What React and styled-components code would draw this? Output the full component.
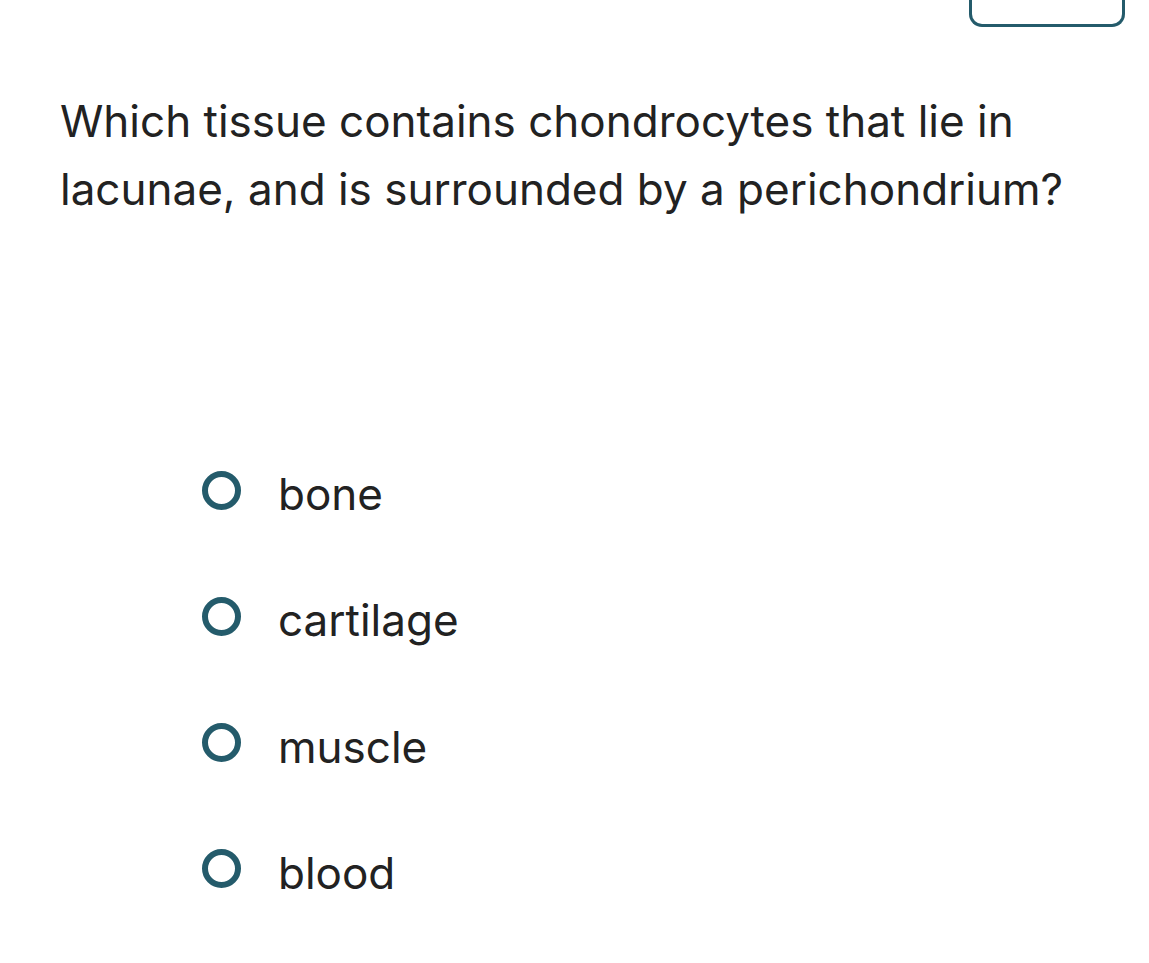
import React from "react";
import styled, { createGlobalStyle } from "styled-components";

const Global = createGlobalStyle`
  html, body { margin: 0; padding: 0; background: #ffffff; }
  body { font-family: "Inter", "Liberation Sans", sans-serif; color: #222222; }
`;

const Page = styled.div`
  width: 1149px;
  min-height: 963px;
  box-sizing: border-box;
  display: flex;
  flex-direction: column;
`;

const TopBar = styled.div`
  display: flex;
  justify-content: flex-end;
  padding-right: 24px;
`;

const TopButton = styled.button`
  width: 156px;
  height: 27px;
  box-sizing: border-box;
  background: #ffffff;
  border: 3px solid #245b6b;
  border-top: none;
  border-radius: 0 0 13px 13px;
  padding: 0;
`;

const Question = styled.h1`
  margin: 60px 0 0 60px;
  width: 1060px;
  font-size: 44px;
  font-weight: 400;
  line-height: 68px;
  letter-spacing: 0;
  color: #222222;
`;

const Options = styled.ul`
  list-style: none;
  margin: 247px 0 0 202px;
  padding: 0;
  display: flex;
  flex-direction: column;
  gap: 86.3px;
`;

const Option = styled.li`
  display: flex;
  align-items: center;
  gap: 37px;
  height: 40px;
  font-size: 44px;
  color: #222222;
  cursor: pointer;
`;

const Radio = styled.span`
  width: 39px;
  height: 39px;
  box-sizing: border-box;
  border: 6.5px solid #245b6b;
  border-radius: 50%;
  flex: none;
`;

const Label = styled.span`
  line-height: 40px;
  margin-top: 8px;
`;

const answers = ["bone", "cartilage", "muscle", "blood"];

export default function App() {
  return (
    <>
      <Global />
      <Page>
        <TopBar>
          <TopButton aria-label="menu" />
        </TopBar>
        <Question>
          Which tissue contains chondrocytes that lie in lacunae, and is surrounded by a perichondrium?
        </Question>
        <Options>
          {answers.map((a) => (
            <Option key={a}>
              <Radio />
              <Label>{a}</Label>
            </Option>
          ))}
        </Options>
      </Page>
    </>
  );
}
